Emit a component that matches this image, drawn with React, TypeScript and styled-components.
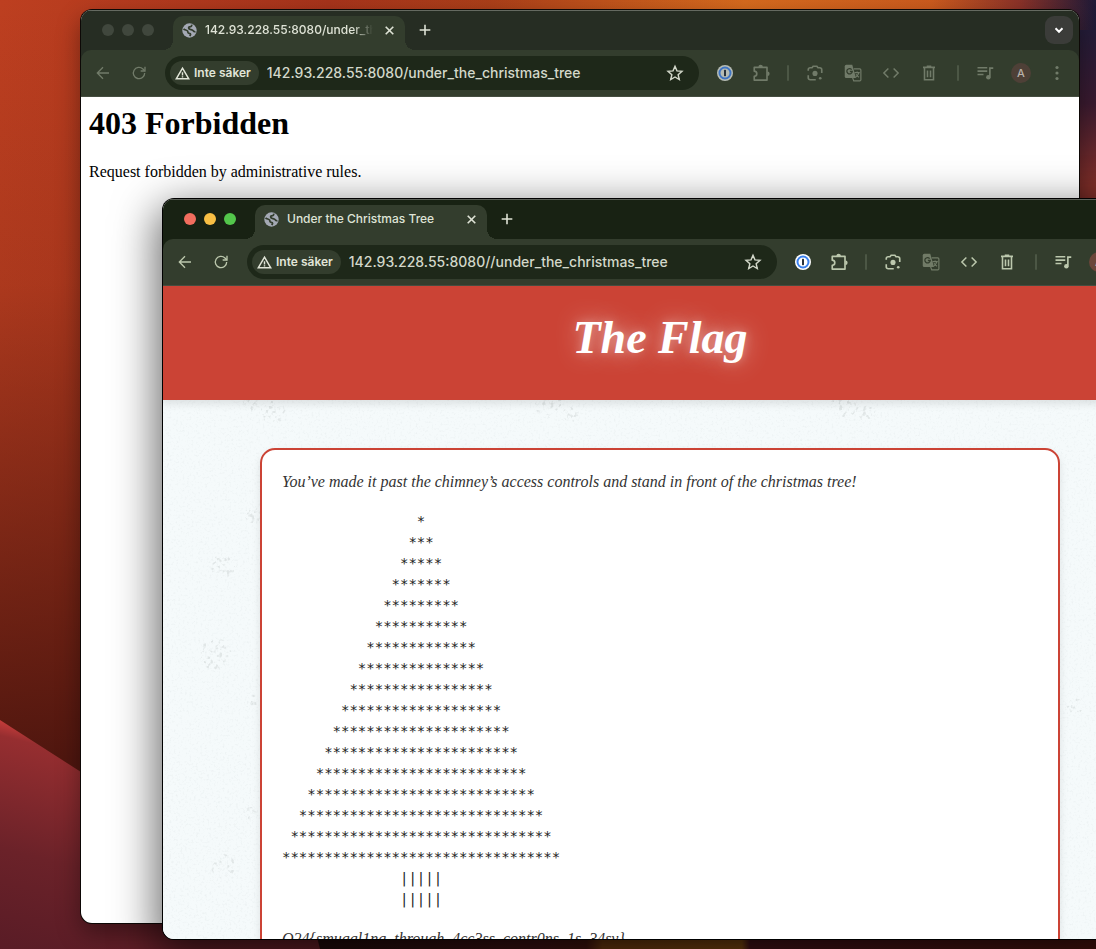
import React from "react";
import styled, { createGlobalStyle, css } from "styled-components";

const ui = `Inter, "Liberation Sans", sans-serif`;
const script = `"Liberation Serif", serif`;

const GlobalStyle = createGlobalStyle`
  * { box-sizing: border-box; }
  body { margin: 0; overflow: hidden; }
  button { border: 0; padding: 0; background: none; font: inherit; color: inherit; cursor: pointer; }
`;

const Desktop = styled.main`
  position: relative;
  min-height: 100vh;
  overflow: hidden;
  background: #3a0e14;
`;

const Wallpaper = styled.svg`
  position: absolute;
  inset: 0;
  width: 100%;
  height: 100%;
`;

const Window = styled.section<{ $front?: boolean }>`
  position: absolute;
  display: flex;
  flex-direction: column;
  overflow: hidden;
  border-radius: 11px;
  background: #fff;
  ${({ $front }) =>
    $front
      ? css`
          top: 199px;
          left: 163px;
          right: -61px;
          bottom: 10px;
          box-shadow: 0 0 0 1px #000, 0 14px 44px 6px rgba(0, 0, 0, 0.6);
        `
      : css`
          top: 10px;
          left: 81px;
          right: 17px;
          bottom: 26px;
          box-shadow: 0 0 0 1px #0d0806, 0 10px 24px rgba(0, 0, 0, 0.4);
        `}
`;

const TabStrip = styled.header<{ $front?: boolean }>`
  display: flex;
  align-items: center;
  flex: none;
  height: 50px;
  margin-bottom: -10px;
  padding: 0 6px 12px 0;
  border-top: 1px solid ${({ $front }) => ($front ? "#5b6058" : "#656a61")};
  background: ${({ $front }) => ($front ? "#182213" : "#262d23")};
  color: #dfe3d6;
`;

const Lights = styled.div`
  display: flex;
  gap: 8px;
  width: 92px;
  padding-left: 21px;
`;

const Light = styled.button<{ $color: string }>`
  width: 12px;
  height: 12px;
  border-radius: 50%;
  background: ${({ $color }) => $color};
`;

const Tab = styled.div`
  position: relative;
  display: flex;
  align-items: center;
  align-self: flex-end;
  width: 232px;
  height: 34px;
  margin-bottom: -2px;
  padding: 0 8px 6px 9px;
  border-radius: 10px 10px 0 0;
  background: #333d2d;
  font: 500 12px/16px ${ui};
  &::before,
  &::after {
    content: "";
    position: absolute;
    bottom: 0;
    width: 10px;
    height: 10px;
  }
  &::before {
    right: 100%;
    background: radial-gradient(circle at 0 0, transparent 10px, #333d2d 10px);
  }
  &::after {
    left: 100%;
    background: radial-gradient(circle at 100% 0, transparent 10px, #333d2d 10px);
  }
`;

const TabTitle = styled.span<{ $fade?: boolean }>`
  flex: 1;
  margin: 0 8px;
  overflow: hidden;
  white-space: nowrap;
  ${({ $fade }) => $fade && css`mask-image: linear-gradient(to left, transparent, #000 20px);`}
`;

const SmallButton = styled.button`
  display: flex;
  align-items: center;
  justify-content: center;
  width: 16px;
  height: 16px;
`;

const NewTab = styled(SmallButton)`
  width: 28px;
  height: 28px;
  margin-left: 6px;
`;

const TabSearch = styled(SmallButton)`
  width: 28px;
  height: 28px;
  margin-left: auto;
  border-radius: 9px;
  background: #3b3c39;
  color: #fff;
`;

const Toolbar = styled.nav<{ $front?: boolean }>`
  position: relative;
  display: flex;
  align-items: center;
  flex: none;
  height: 47px;
  padding: 0 4px;
  border-bottom: 1px solid #454d40;
  border-radius: 10px 10px 0 0;
  background: #333d2d;
  color: ${({ $front }) => ($front ? "#bcc8ad" : "#717b69")};
`;

const Tool = styled.button<{ $dim?: boolean }>`
  display: flex;
  align-items: center;
  justify-content: center;
  flex: none;
  width: 36px;
  height: 34px;
  opacity: ${({ $dim }) => ($dim ? 0.45 : 1)};
`;

const ToolGroup = styled.div<{ $gap?: number }>`
  display: flex;
  flex: none;
  gap: ${({ $gap = 0 }) => $gap}px;
  padding-right: ${({ $gap = 0 }) => $gap}px;
`;

const Divider = styled.span`
  flex: none;
  width: 2px;
  height: 16px;
  margin: 0 8px;
  border-radius: 1px;
  background: #4c5745;
`;

const Omnibox = styled.div`
  display: flex;
  align-items: center;
  flex: 1;
  min-width: 0;
  height: 34px;
  margin: 0 8px;
  padding: 0 6px 0 5px;
  border-radius: 17px;
  background: #1e2819;
`;

const SecurityChip = styled.button`
  display: flex;
  align-items: center;
  flex: none;
  gap: 4px;
  height: 24px;
  padding: 0 8px 0 5px;
  border-radius: 12px;
  background: #333d2d;
  color: #e1e5d8;
  font: 600 12px/16px ${ui};
`;

const Address = styled.input`
  flex: 1;
  min-width: 0;
  margin-left: 8px;
  padding: 0;
  border: 0;
  outline: 0;
  background: none;
  color: #d3d8ca;
  font: 500 14px/20px ${ui};
`;

const Bookmark = styled(Tool)`
  color: #d3d8ca;
`;

const Avatar = styled.span`
  width: 20px;
  height: 20px;
  border-radius: 50%;
  background: #4e4037;
  color: #b9b2aa;
  font: 500 11px/20px ${ui};
  text-align: center;
`;

const FrontAvatar = styled(Avatar)`
  background: #6b463a;
`;

const ErrorPage = styled.article`
  flex: 1;
  padding: 8px;
  color: #000;
  font: 16px/18px "Liberation Serif", serif;
`;

const ErrorTitle = styled.h1`
  margin: 0 0 21px;
  font-size: 32px;
  line-height: 37px;
`;

const Paragraph = styled.p`
  margin: 0;
`;

const FlagPage = styled.article`
  position: relative;
  flex: 1;
  min-height: 0;
  overflow: hidden;
  background: #f5fafb;
`;

const Grain = styled.svg`
  position: absolute;
  inset: 0;
  width: 100%;
  height: 100%;
`;

const FlagHeader = styled.header`
  position: relative;
  padding: 24px 0 34px;
  background: #cb4335;
  box-shadow: 0 4px 8px rgba(0, 0, 0, 0.1);
  color: #fff;
  text-align: center;
`;

const FlagTitle = styled.h1`
  margin: 0;
  font: italic 700 46px/56px ${script};
  text-shadow: 0 0 10px rgba(255, 255, 255, 0.3), 0 0 24px rgba(255, 255, 255, 0.5);
`;

const Card = styled.section`
  position: relative;
  width: 800px;
  max-width: 100%;
  min-height: 600px;
  margin: 48px auto;
  padding: 20px;
  border: 2px solid #cb4335;
  border-radius: 15px;
  background: #fff;
  box-shadow: 0 4px 8px rgba(0, 0, 0, 0.1);
  color: #333;
  font: italic 16px/24px ${script};
`;

const Tree = styled.pre`
  margin: 17px 0;
  color: #222;
  font: normal 14px/21px "DejaVu Sans Mono", monospace;
`;

const Stroke = ({ size = 16, width = 2, children }: { size?: number; width?: number; children: React.ReactNode }) => (
  <svg width={size} height={size} viewBox="0 0 24 24" fill="none" stroke="currentColor" strokeWidth={width} aria-hidden>
    {children}
  </svg>
);

const Globe = () => (
  <svg width="15" height="15" viewBox="0 0 24 24" aria-hidden>
    <circle cx="12" cy="12" r="11.500" fill="#a4a9b4" />
    <path d="M2.500 9.500c2 2 5.500 1.500 6.500 3.500s-.5 3 2.500 3.500 2.500 2 1 4.500" fill="none" stroke="#333d2d" strokeWidth="2.800" />
    <path d="M15.500 2.500c.5 3-1.500 3.500-3.500 3.800s-1.500 3 .5 3.700 3.500.2 5 2 2.500 2.500 4 1.500" fill="none" stroke="#333d2d" strokeWidth="2.800" />
  </svg>
);
const Close = () => <Stroke size={13} width={3}><path d="M5 5l14 14M19 5L5 19" /></Stroke>;
const Plus = () => <Stroke size={16} width={2.4}><path d="M12 4v16M4 12h16" /></Stroke>;
const Chevron = () => <Stroke size={14} width={3.4}><path d="M6 9l6 6 6-6" /></Stroke>;
const Back = () => <Stroke><path d="M21 12H4M12 3.500L3.500 12l8.500 8.500" /></Stroke>;
const Reload = () => (
  <Stroke>
    <path d="M20.500 12a8.500 8.500 0 1 1-2.600-6.100L20.500 8.500" />
    <path d="M21 2.500V9h-6.500" />
  </Stroke>
);
const Warning = () => (
  <Stroke size={15} width={2.3}>
    <path d="M12 3.500L22 20.500H2z" />
    <path d="M12 10v5M12 16.500v2" />
  </Stroke>
);
const Star = () => (
  <Stroke size={18} width={1.9}>
    <path d="M12 3l2.600 6.200 6.700.6-5.100 4.400 1.500 6.600L12 17.300l-5.700 3.500 1.500-6.600-5.100-4.400 6.700-.6z" />
  </Stroke>
);
const Password = ({ front }: { front?: boolean }) => (
  <svg width="16" height="16" viewBox="0 0 16 16" aria-hidden>
    <circle cx="8" cy="8" r="8" fill={front ? "#fff" : "#b6bcb4"} />
    <circle cx="8" cy="8" r="5.500" fill={front ? "#fff" : "#b6bcb4"} stroke={front ? "#3b82f0" : "#3f75c4"} strokeWidth="2" />
    <rect x="7" y="4.800" width="2" height="6.400" rx=".6" fill="#27313c" />
  </svg>
);
const Puzzle = () => (
  <Stroke size={18} width={2.2}>
    <path d="M3 4.500h17v17H3v-5c2-.2 3.400-1.600 3.400-3.500S5 9.700 3 9.500z" strokeLinejoin="round" />
    <path d="M8.500 4a3 3 0 0 1 6 0zM20.500 10a3 3 0 0 1 0 6z" fill="currentColor" stroke="none" />
  </Stroke>
);
const Lens = () => (
  <Stroke size={18} width={2.2}>
    <path d="M3 9V7.500A2.500 2.500 0 0 1 5.500 5H8l1.500-2h5L16 5h2.500A2.500 2.500 0 0 1 21 7.500V12M3 15v3.500A2.500 2.500 0 0 0 5.500 21H13" />
    <circle cx="12" cy="12.500" r="3.400" fill="currentColor" stroke="none" />
    <circle cx="19" cy="19" r="1.800" fill="currentColor" stroke="none" />
  </Stroke>
);
const Translate = () => (
  <svg width="18" height="18" viewBox="0 0 24 24" aria-hidden>
    <path d="M3 1h8l5 17.500H3a2 2 0 0 1-2-2V3a2 2 0 0 1 2-2z" fill="currentColor" />
    <path d="M13 6.500h8a1.500 1.500 0 0 1 1.500 1.500v13a1.500 1.500 0 0 1-1.500 1.500h-8L11.500 18.500" fill="none" stroke="currentColor" strokeWidth="1.600" />
    <path d="M10.200 7.400A3.600 3.600 0 1 0 11 10H7.800" fill="none" stroke="#333d2d" strokeWidth="1.700" />
    <path d="M14 11.500h7M17.500 10v1.500M19.800 11.500c-.6 2.800-2.300 4.700-4 6M16 13.500c.8 1.800 2.300 3.200 4 4.200" fill="none" stroke="currentColor" strokeWidth="1.500" />
  </svg>
);
const Code = () => <Stroke size={18}><path d="M8.500 6L2.500 12l6 6M15.500 6l6 6-6 6" /></Stroke>;
const Trash = () => (
  <Stroke size={18} width={2.1}>
    <path d="M4 4.500h16M9 3h6M6 5v16h12V5M10 8.500v9M14 8.500v9" />
  </Stroke>
);
const Playlist = () => (
  <Stroke size={18} width={2.2}>
    <path d="M2 5h13M2 9.500h13M2 14h8M18.500 17V5.500H23" />
    <circle cx="16.500" cy="17.500" r="3" fill="currentColor" stroke="none" />
  </Stroke>
);
const More = () => (
  <svg width="16" height="16" viewBox="0 0 16 16" fill="currentColor" aria-hidden>
    <circle cx="8" cy="2.500" r="1.600" /><circle cx="8" cy="8" r="1.600" /><circle cx="8" cy="13.500" r="1.600" />
  </svg>
);

interface BrowserProps {
  front?: boolean;
  title: string;
  url: string;
  children: React.ReactNode;
}

function Browser({ front, title, url, children }: BrowserProps) {
  const lights = front ? ["#f26d5e", "#f8bf44", "#53c64b"] : ["#40473d", "#40473d", "#40473d"];
  return (
    <Window $front={front} aria-label={title}>
      <TabStrip $front={front}>
        <Lights>
          {["Close window", "Minimise window", "Zoom window"].map((label, i) => (
            <Light key={label} $color={lights[i]} aria-label={label} />
          ))}
        </Lights>
        <Tab>
          <Globe />
          <TabTitle $fade={!front}>{title}</TabTitle>
          <SmallButton aria-label="Close tab"><Close /></SmallButton>
        </Tab>
        <NewTab aria-label="New tab"><Plus /></NewTab>
        <TabSearch aria-label="Search tabs"><Chevron /></TabSearch>
      </TabStrip>
      <Toolbar $front={front}>
        <Tool aria-label="Back"><Back /></Tool>
        <Tool aria-label="Reload"><Reload /></Tool>
        <Omnibox>
          <SecurityChip><Warning />Inte säker</SecurityChip>
          <Address aria-label="Address" defaultValue={url} spellCheck={false} />
          <Bookmark aria-label="Bookmark"><Star /></Bookmark>
        </Omnibox>
        <ToolGroup>
          <Tool aria-label="Passwords"><Password front={front} /></Tool>
          <Tool aria-label="Extensions"><Puzzle /></Tool>
        </ToolGroup>
        <Divider />
        <ToolGroup $gap={2}>
          <Tool aria-label="Lens"><Lens /></Tool>
          <Tool aria-label="Translate" $dim={front}><Translate /></Tool>
          <Tool aria-label="Developer tools"><Code /></Tool>
          <Tool aria-label="Delete browsing data"><Trash /></Tool>
        </ToolGroup>
        <Divider />
        <ToolGroup>
          <Tool aria-label="Media"><Playlist /></Tool>
          <Tool aria-label="Profile">{front ? <FrontAvatar>A</FrontAvatar> : <Avatar>A</Avatar>}</Tool>
          <Tool aria-label="Menu"><More /></Tool>
        </ToolGroup>
      </Toolbar>
      {children}
    </Window>
  );
}

const smudges = [
  [88, 118, 8], [110, 126, 12], [386, 118, 14], [408, 128, 8], [682, 118, 14], [704, 128, 8],
  [90, 229, 8], [60, 280, 12], [52, 368, 16], [88, 415, 7], [88, 528, 7], [60, 580, 12], [912, 420, 8],
];

const rows = Array.from({ length: 17 }, (_, i) => " ".repeat(16 - i) + "*".repeat(2 * i + 1));
const trunk = " ".repeat(14) + "|||||";
const tree = [...rows, trunk, trunk].join("\n");

export default function App() {
  return (
    <Desktop>
      <GlobalStyle />
      <Wallpaper viewBox="0 0 1096 949" preserveAspectRatio="none" aria-hidden>
        <defs>
          <linearGradient id="sky" x1="0" x2="1" y1="0" y2="0">
            <stop offset="0" stopColor="#bd3f20" />
            <stop offset=".3" stopColor="#a8341b" />
            <stop offset=".45" stopColor="#ad4019" />
            <stop offset=".68" stopColor="#d96c1e" />
            <stop offset=".85" stopColor="#cf5c1e" />
            <stop offset=".93" stopColor="#8d3329" />
            <stop offset="1" stopColor="#1d1a38" />
          </linearGradient>
          <linearGradient id="dusk" x1="0" x2=".06" y1="0" y2="1">
            <stop offset="0" stopColor="#4a140e" stopOpacity="0" />
            <stop offset=".3" stopColor="#4a140e" stopOpacity=".15" />
            <stop offset=".8" stopColor="#4a140e" stopOpacity=".95" />
          </linearGradient>
          <linearGradient id="edge" x1="0" x2="0" y1="0" y2="1">
            <stop offset="0" stopColor="#241c38" />
            <stop offset=".08" stopColor="#3a1a2f" />
            <stop offset=".17" stopColor="#84302a" />
          </linearGradient>
          <linearGradient id="hill" x1="0" y1="0" x2="-.35" y2="1">
            <stop offset="0" stopColor="#c43c3a" />
            <stop offset=".06" stopColor="#962e30" />
            <stop offset=".5" stopColor="#6b2229" />
            <stop offset="1" stopColor="#541a25" />
          </linearGradient>
          <linearGradient id="base" x1="0" x2="1" y1="0" y2="0">
            <stop offset="0" stopColor="#200c0b" />
            <stop offset=".3" stopColor="#3f1214" />
            <stop offset=".36" stopColor="#45150f" />
            <stop offset=".38" stopColor="#6f3b0f" />
            <stop offset=".555" stopColor="#7c4710" />
            <stop offset=".565" stopColor="#45131a" />
            <stop offset="1" stopColor="#4a140e" />
          </linearGradient>
        </defs>
        <rect width="1096" height="949" fill="url(#sky)" />
        <rect width="1096" height="949" fill="url(#dusk)" />
        <rect x="1079" y="30" width="17" height="919" fill="url(#edge)" />
        <rect x="300" y="920" width="796" height="29" fill="url(#base)" />
        <path d="M0 720L313 921L320 949H0z" fill="url(#hill)" />
      </Wallpaper>
      <Browser title="142.93.228.55:8080/under_the_christmas_tree" url="142.93.228.55:8080/under_the_christmas_tree">
        <ErrorPage>
          <ErrorTitle>403 Forbidden</ErrorTitle>
          <Paragraph>Request forbidden by administrative rules.</Paragraph>
        </ErrorPage>
      </Browser>
      <Browser front title="Under the Christmas Tree" url="142.93.228.55:8080//under_the_christmas_tree">
        <FlagPage>
          <Grain aria-hidden>
            <filter id="grain">
              <feTurbulence type="fractalNoise" baseFrequency=".45" numOctaves="2" seed="4" />
              <feColorMatrix values="0 0 0 0 .7  0 0 0 0 .75  0 0 0 0 .76  2.200 0 0 0 -1.150" />
            </filter>
            <filter id="speckle">
              <feTurbulence type="fractalNoise" baseFrequency=".25" numOctaves="2" seed="9" />
              <feColorMatrix values="0 0 0 0 .6  0 0 0 0 .64  0 0 0 0 .64  6 0 0 0 -3.300" />
              <feComposite operator="in" in2="SourceGraphic" />
            </filter>
            <rect width="100%" height="100%" filter="url(#grain)" opacity=".4" />
            <g filter="url(#speckle)" opacity=".45">
              {smudges.map(([x, y, r]) => (
                <circle key={`${x}-${y}`} cx={x} cy={y} r={r} />
              ))}
            </g>
          </Grain>
          <FlagHeader>
            <FlagTitle>The Flag</FlagTitle>
          </FlagHeader>
          <Card>
            <Paragraph>You’ve made it past the chimney’s access controls and stand in front of the christmas tree!</Paragraph>
            <Tree>{tree}</Tree>
            <Paragraph>O24&#123;smuggl1ng_through_4cc3ss_contr0ns_1s_34sy&#125;</Paragraph>
          </Card>
        </FlagPage>
      </Browser>
    </Desktop>
  );
}
